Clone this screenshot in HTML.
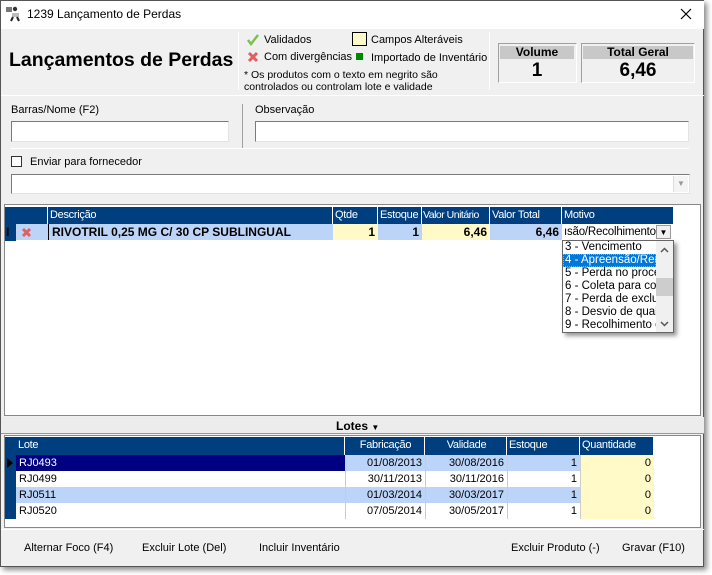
<!DOCTYPE html>
<html><head><meta charset="utf-8"><style>
*{margin:0;padding:0;box-sizing:border-box}
body{width:712px;height:575px;background:#fff;font-family:"Liberation Sans",sans-serif;font-size:11px;color:#000;position:relative;overflow:hidden}
.a{position:absolute;white-space:nowrap}
.win{position:absolute;left:0;top:0;width:704px;height:567px;background:#f0f0f0;border:1px solid #555;box-shadow:3px 3px 5px rgba(0,0,0,.45)}
.inp{position:absolute;background:#fff;border:1px solid #7a7a7a;border-right-color:#e3e3e3;border-bottom-color:#e3e3e3}
.hd{position:absolute;background:#003f7f;color:#fff;height:17px;line-height:17px;padding-left:2px;border-right:1px solid #fff;white-space:nowrap;overflow:hidden;letter-spacing:-0.3px}
.c{position:absolute;height:16px;line-height:16px;padding:0 3px;white-space:nowrap;overflow:hidden}
</style></head><body>
<div class="win"></div>
<div class="a" style="left:1px;top:1px;width:703px;height:28px;background:#fff"></div>
<svg class="a" style="left:5px;top:5px" width="17" height="17" viewBox="0 0 17 17"><rect x="1" y="2" width="6" height="5" fill="#777"/><circle cx="10" cy="4" r="2.2" fill="#333"/><path d="M7 8h7v4H7z" fill="#bbb"/><path d="M8 12l-2 4M12 12l2 4" stroke="#222" stroke-width="2"/></svg>
<div class="a" style="left:27px;top:7px;font-size:12px">1239 Lançamento de Perdas</div>
<svg class="a" style="left:680px;top:8px" width="12" height="12"><path d="M1 1L11 11M11 1L1 11" stroke="#000" stroke-width="1.2"/></svg>
<div class="a" style="left:9px;top:49px;font-size:19.5px;font-weight:bold">Lançamentos de Perdas</div>
<div class="a" style="left:238px;top:32px;width:1px;height:58px;background:#a0a0a0;border-right:1px solid #fff"></div>
<svg class="a" style="left:246px;top:33px" width="14" height="13"><path d="M2 7l3 4 7-9" stroke="#7cc24a" stroke-width="2.5" fill="none"/></svg>
<div class="a" style="left:264px;top:34px">Validados</div>
<svg class="a" style="left:247px;top:51px" width="12" height="12"><path d="M2 2L10 10M10 2L2 10" stroke="#e06060" stroke-width="3"/></svg>
<div class="a" style="left:264px;top:51px">Com divergências</div>
<div class="a" style="left:244px;top:69px;font-size:10.5px;line-height:12px">* Os produtos com o texto em negrito são<br>controlados ou controlam lote e validade</div>
<div class="a" style="left:352px;top:32px;width:15px;height:14px;background:#fffac8;border:1px solid #000"></div>
<div class="a" style="left:371px;top:34px">Campos Alteráveis</div>
<div class="a" style="left:356px;top:53px;width:7px;height:7px;background:#080"></div>
<div class="a" style="left:371px;top:52px">Importado de Inventário</div>
<div class="a" style="left:489px;top:32px;width:1px;height:58px;background:#a0a0a0;border-right:1px solid #fff"></div>
<div class="a" style="left:498px;top:43px;width:79px;height:40px;border:1px solid #a0a0a0;border-right-color:#fff;border-bottom-color:#fff"></div>
<div class="a" style="left:500px;top:46px;width:74px;height:13px;background:#c8c8c8;text-align:center;font-weight:bold;font-size:12px;line-height:13px">Volume</div>
<div class="a" style="left:500px;top:60px;width:74px;text-align:center;font-weight:bold;font-size:19px">1</div>
<div class="a" style="left:581px;top:43px;width:114px;height:40px;border:1px solid #a0a0a0;border-right-color:#fff;border-bottom-color:#fff"></div>
<div class="a" style="left:583px;top:46px;width:110px;height:13px;background:#c8c8c8;text-align:center;font-weight:bold;font-size:12px;line-height:13px">Total Geral</div>
<div class="a" style="left:583px;top:60px;width:110px;text-align:center;font-weight:bold;font-size:19px">6,46</div>
<div class="a" style="left:1px;top:95px;width:703px;height:1px;background:#a0a0a0;border-bottom:1px solid #fff"></div>
<div class="a" style="left:11px;top:104px">Barras/Nome (F2)</div>
<div class="inp" style="left:11px;top:121px;width:218px;height:21px"></div>
<div class="a" style="left:242px;top:104px;width:1px;height:44px;background:#a0a0a0"></div>
<div class="a" style="left:255px;top:104px">Observação</div>
<div class="inp" style="left:255px;top:121px;width:434px;height:21px"></div>
<div class="a" style="left:11px;top:148px;width:678px;height:1px;background:#a0a0a0;border-bottom:1px solid #fff"></div>
<div class="a" style="left:11px;top:156px;width:11px;height:11px;background:#fff;border:1px solid #333"></div>
<div class="a" style="left:30px;top:156px">Enviar para fornecedor</div>
<div class="inp" style="left:11px;top:174px;width:679px;height:20px"></div>
<div class="a" style="left:673px;top:176px;width:15px;height:16px;background:#f4f4f4;border-left:1px solid #ddd;color:#999;font-size:8px;text-align:center;line-height:16px">▼</div>
<div class="a" style="left:4px;top:204px;width:697px;height:212px;background:#fff;border:1px solid #888"></div>
<div class="a" style="left:5px;top:207px;width:669px;height:17px;background:#003f7f"></div>
<div class="hd" style="left:16px;top:207px;width:32px"></div>
<div class="hd" style="left:48px;top:207px;width:285px">Descrição</div>
<div class="hd" style="left:333px;top:207px;width:45px">Qtde</div>
<div class="hd" style="left:378px;top:207px;width:44px">Estoque</div>
<div class="hd" style="left:422px;top:207px;width:68px;font-size:10.5px;letter-spacing:-0.5px;padding-left:1px">Valor Unitário</div>
<div class="hd" style="left:490px;top:207px;width:72px">Valor Total</div>
<div class="hd" style="left:562px;top:207px;width:112px">Motivo</div>
<div class="a" style="left:5px;top:207px;width:11px;height:34px;background:#003f7f"></div>
<div class="a" style="left:6px;top:225px;font-size:12px;color:#000;font-weight:bold">I</div>
<div class="c" style="left:16px;top:224px;width:32px;background:#bcd4f8"></div>
<svg class="a" style="left:21px;top:227px" width="11" height="11"><path d="M2 2L9 9M9 2L2 9" stroke="#e06060" stroke-width="3"/></svg>
<div class="c" style="left:48px;top:224px;width:285px;background:#bcd4f8;font-weight:bold;font-size:12px;border-left:1px solid #000">RIVOTRIL 0,25 MG C/ 30 CP SUBLINGUAL</div>
<div class="c" style="left:333px;top:224px;width:45px;background:#fffac8;text-align:right;font-weight:bold;font-size:12px">1</div>
<div class="c" style="left:378px;top:224px;width:44px;background:#bcd4f8;text-align:right;font-weight:bold;font-size:12px">1</div>
<div class="c" style="left:422px;top:224px;width:68px;background:#fffac8;text-align:right;font-weight:bold;font-size:12px">6,46</div>
<div class="c" style="left:490px;top:224px;width:72px;background:#bcd4f8;text-align:right;font-weight:bold;font-size:12px">6,46</div>
<div class="c" style="left:562px;top:224px;width:94px;background:#fff;font-size:11.5px;padding:0 0 0 2px;letter-spacing:-0.2px">ısão/Recolhimento</div>
<div class="a" style="left:656px;top:225px;width:15px;height:14px;background:#f0f0f0;border:1px solid #999;font-size:8px;text-align:center;line-height:13px">▼</div>
<div class="a" style="left:562px;top:240px;width:112px;height:93px;background:#fff;border:1px solid #666;box-shadow:3px 3px 4px rgba(0,0,0,.4);overflow:hidden;font-size:11.5px;line-height:13px">
<div style="padding-left:2px">3 - Vencimento</div>
<div style="padding-left:2px;background:#0078d7;color:#fff;width:93px;outline:1px dotted #f90;outline-offset:-1px">4 - Apreensão/Rec</div>
<div style="padding-left:2px">5 - Perda no proce</div>
<div style="padding-left:2px">6 - Coleta para cor</div>
<div style="padding-left:2px">7 - Perda de exclus</div>
<div style="padding-left:2px">8 - Desvio de quali</div>
<div style="padding-left:2px">9 - Recolhimento d</div>
<div style="position:absolute;left:93px;top:0;width:17px;height:91px;background:#f0f0f0"></div>
<div style="position:absolute;left:93px;top:37px;width:17px;height:18px;background:#cdcdcd"></div>
<svg style="position:absolute;left:97px;top:6px" width="9" height="6"><path d="M1 5L4.5 1.5L8 5" stroke="#555" stroke-width="1.5" fill="none"/></svg>
<svg style="position:absolute;left:97px;top:80px" width="9" height="6"><path d="M1 1L4.5 4.5L8 1" stroke="#555" stroke-width="1.5" fill="none"/></svg>
</div>
<div class="a" style="left:1px;top:417px;width:703px;height:17px;background:#ececec;border-bottom:1px solid #999"></div>
<div class="a" style="left:336px;top:419px;font-weight:bold;font-size:12px">Lotes <span style="font-size:8px">▼</span></div>
<div class="a" style="left:4px;top:435px;width:697px;height:93px;background:#fff;border:1px solid #888"></div>
<div class="a" style="left:5px;top:437px;width:11px;height:82px;background:#003f7f"></div>
<svg class="a" style="left:7px;top:458px" width="6" height="10"><path d="M0 0L6 5L0 10z" fill="#000"/></svg>
<div class="hd" style="left:16px;top:437px;width:329px;height:18px">Lote</div>
<div class="hd" style="left:345px;top:437px;width:80px;height:18px;text-align:center">Fabricação</div>
<div class="hd" style="left:425px;top:437px;width:82px;height:18px;text-align:center">Validade</div>
<div class="hd" style="left:507px;top:437px;width:73px;height:18px">Estoque</div>
<div class="hd" style="left:580px;top:437px;width:74px;height:18px">Quantidade</div>
<div class="c" style="left:16px;top:455px;width:329px;background:#000080;color:#fff">RJ0493</div>
<div class="c" style="left:345px;top:455px;width:80px;background:#bcd4f8;text-align:right">01/08/2013</div>
<div class="c" style="left:425px;top:455px;width:82px;background:#bcd4f8;text-align:right">30/08/2016</div>
<div class="c" style="left:507px;top:455px;width:73px;background:#bcd4f8;text-align:right">1</div>
<div class="c" style="left:580px;top:455px;width:74px;background:#fffac8;text-align:right">0</div>
<div class="c" style="left:16px;top:471px;width:329px">RJ0499</div>
<div class="c" style="left:345px;top:471px;width:80px;text-align:right">30/11/2013</div>
<div class="c" style="left:425px;top:471px;width:82px;text-align:right">30/11/2016</div>
<div class="c" style="left:507px;top:471px;width:73px;text-align:right">1</div>
<div class="c" style="left:580px;top:471px;width:74px;background:#fffac8;text-align:right">0</div>
<div class="c" style="left:16px;top:487px;width:329px;background:#bcd4f8">RJ0511</div>
<div class="c" style="left:345px;top:487px;width:80px;background:#bcd4f8;text-align:right">01/03/2014</div>
<div class="c" style="left:425px;top:487px;width:82px;background:#bcd4f8;text-align:right">30/03/2017</div>
<div class="c" style="left:507px;top:487px;width:73px;background:#bcd4f8;text-align:right">1</div>
<div class="c" style="left:580px;top:487px;width:74px;background:#fffac8;text-align:right">0</div>
<div class="c" style="left:16px;top:503px;width:329px">RJ0520</div>
<div class="c" style="left:345px;top:503px;width:80px;text-align:right">07/05/2014</div>
<div class="c" style="left:425px;top:503px;width:82px;text-align:right">30/05/2017</div>
<div class="c" style="left:507px;top:503px;width:73px;text-align:right">1</div>
<div class="c" style="left:580px;top:503px;width:74px;background:#fffac8;text-align:right">0</div>
<div class="a" style="left:345px;top:455px;width:1px;height:64px;background:#ccc"></div>
<div class="a" style="left:425px;top:455px;width:1px;height:64px;background:#ccc"></div>
<div class="a" style="left:507px;top:455px;width:1px;height:64px;background:#ccc"></div>
<div class="a" style="left:580px;top:455px;width:1px;height:64px;background:#ccc"></div>
<div class="a" style="left:1px;top:529px;width:703px;height:1px;background:#a0a0a0;border-bottom:1px solid #fff"></div>
<div class="a" style="left:24px;top:542px">Alternar Foco (F4)</div>
<div class="a" style="left:142px;top:542px">Excluir Lote (Del)</div>
<div class="a" style="left:259px;top:542px">Incluir Inventário</div>
<div class="a" style="left:511px;top:542px">Excluir Produto (-)</div>
<div class="a" style="left:622px;top:542px">Gravar (F10)</div>
</body></html>
